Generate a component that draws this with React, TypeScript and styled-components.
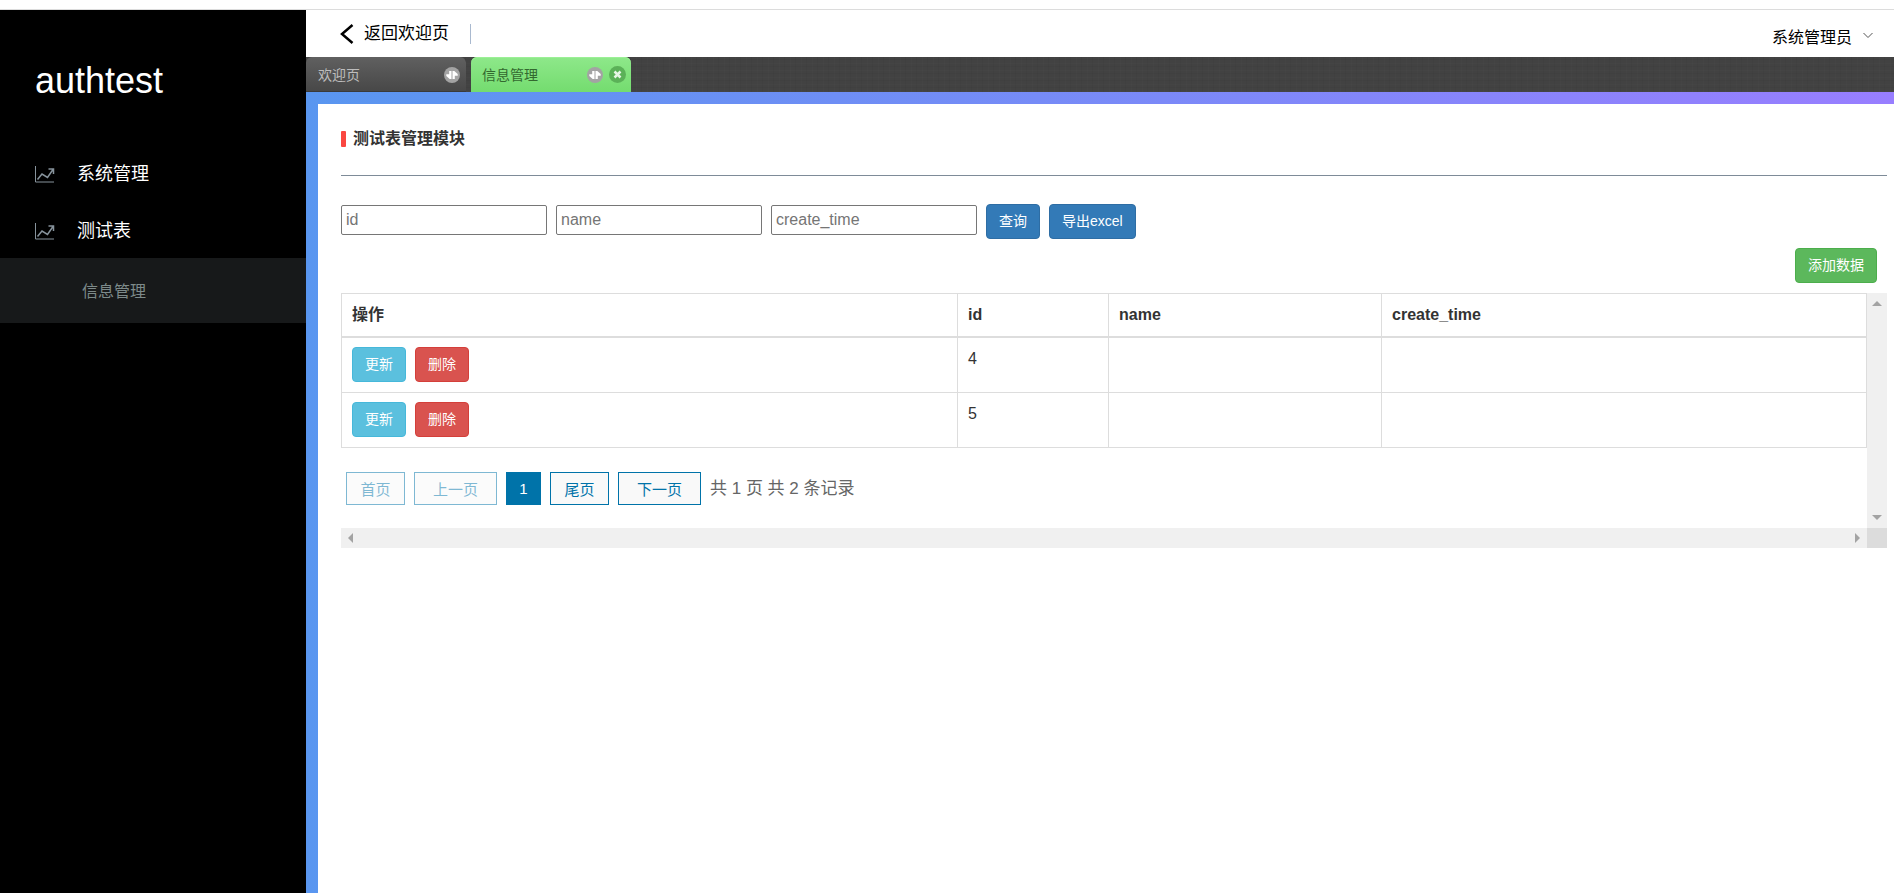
import React from 'react';
import styled, { createGlobalStyle, css } from 'styled-components';

const GlobalStyle = createGlobalStyle`
  * { box-sizing: border-box; }
  body {
    margin: 0;
    background: #fff;
    color: #333;
    font-family: "Liberation Sans", "Noto Sans CJK SC", sans-serif;
    font-size: 16px;
    line-height: 24px;
  }
  button, input { font-family: inherit; }
  a { color: inherit; text-decoration: none; }
`;

const Page = styled.div`
  display: flex;
  flex-direction: column;
  min-height: 100vh;
`;

const TopStrip = styled.div`
  height: 10px;
  border-bottom: 1px solid #dcdcdc;
`;

const Body = styled.div`
  display: flex;
  flex: 1;
`;

const Sidebar = styled.aside`
  flex: 0 0 306px;
  background: #000;
`;

const Brand = styled.h1`
  margin: 0;
  padding: 51px 35px 0;
  color: #fff;
  font-size: 36px;
  font-weight: 400;
  line-height: 40px;
`;

const Menu = styled.nav`
  padding-top: 43px;
`;

const MenuItem = styled.a`
  display: flex;
  align-items: center;
  gap: 22px;
  height: 57px;
  padding: 2px 0 0 35px;
  color: #fff;
  font-size: 18px;

  svg { color: #87939c; }
`;

const SubItem = styled.a`
  display: flex;
  align-items: center;
  height: 65px;
  padding: 2px 0 0 82px;
  background: #17191a;
  color: #7d8a8a;
`;

const Main = styled.main`
  display: flex;
  flex: 1;
  flex-direction: column;
  min-width: 0;
`;

const Header = styled.header`
  display: flex;
  justify-content: space-between;
  height: 47px;
  padding: 0 20px 0 34px;
  color: #000;
`;

const BackLink = styled.a`
  display: flex;
  align-items: center;
  align-self: flex-start;
  gap: 10px;
  height: 20px;
  margin-top: 14px;
  padding-right: 21px;
  border-right: 1px solid #a9b9cf;
  font-size: 17px;
`;

const UserButton = styled.button`
  display: flex;
  align-items: center;
  gap: 10px;
  padding: 5px 0 0;
  border: 0;
  background: none;
  color: #000;
  font-size: 16px;
`;

const TabBar = styled.div`
  display: flex;
  gap: 5px;
  height: 35px;
  background:
    repeating-linear-gradient(90deg, rgba(255, 255, 255, 0.01) 0 1px, transparent 1px 5px, rgba(0, 0, 0, 0.03) 5px 6px, transparent 6px 11px),
    repeating-linear-gradient(0deg, rgba(255, 255, 255, 0.01) 0 1px, transparent 1px 4px, rgba(0, 0, 0, 0.03) 4px 5px, transparent 5px 7px),
    #424242;
`;

const Tab = styled.div<{ $active?: boolean }>`
  display: flex;
  align-items: center;
  gap: 6px;
  width: 160px;
  padding: 0 6px 0 12px;
  border-radius: 6px 6px 0 0;
  font-size: 14px;
  ${({ $active }) =>
    $active
      ? css`
          padding: 0 5px 0 11px;
          background: linear-gradient(#8ee88a, #74dc6f);
          color: #33682f;
          box-shadow: inset 0 1px #9bf096;
        `
      : css`
          background: linear-gradient(#606060, #474747);
          color: #bdbdbd;
          box-shadow: inset 0 -1px #3a3a3a;
        `}
`;

const TabLabel = styled.a`
  flex: 1;
`;

const IconButton = styled.button`
  display: flex;
  padding: 0;
  border: 0;
  background: none;
`;

const Frame = styled.div`
  display: flex;
  flex: 1;
  padding: 12px 0 0 12px;
  background: linear-gradient(90deg, #5996f0, #987eff);
`;

const Panel = styled.section`
  flex: 1;
  min-width: 0;
  padding: 23px 7px 23px 23px;
  background: #fff;
`;

const Title = styled.h2`
  display: flex;
  align-items: center;
  gap: 7px;
  margin: 0;
  padding-bottom: 24px;
  border-bottom: 1px solid #7e8b98;
  font-size: 16px;
  line-height: 24px;

  &::before {
    content: "";
    width: 5px;
    height: 16px;
    border-radius: 1px;
    background: #fa4741;
  }
`;

const Filters = styled.form`
  display: flex;
  flex-wrap: wrap;
  align-items: flex-start;
  gap: 9px;
  padding-top: 28px;
`;

const Field = styled.input`
  width: 206px;
  height: 30px;
  margin: 1px 0 0;
  padding: 1px 4px;
  border: 1px solid #767676;
  border-radius: 2px;
  font-size: 16px;

  &::placeholder { color: #757575; }
`;

const tones = {
  primary: ['#337ab7', '#2e6da4'],
  success: ['#5cb85c', '#4cae4c'],
  info: ['#5bc0de', '#46b8da'],
  danger: ['#d9534f', '#d43f3a'],
};

const Button = styled.button<{ $tone: keyof typeof tones }>`
  height: 35px;
  padding: 0 12px 2px;
  border: 1px solid ${({ $tone }) => tones[$tone][1]};
  border-radius: 4px;
  background: ${({ $tone }) => tones[$tone][0]};
  color: #fff;
  font-size: 14px;
  line-height: 20px;
`;

const Toolbar = styled.div`
  display: flex;
  justify-content: flex-end;
  padding: 9px 10px 10px;
`;

const ScrollArea = styled.div`
  display: grid;
  grid-template-columns: 1fr 20px;
  grid-template-rows: auto 20px;
`;

const ScrollTrack = styled.div<{ $vertical?: boolean }>`
  display: flex;
  flex-direction: ${({ $vertical }) => ($vertical ? 'column' : 'row')};
  align-items: center;
  justify-content: space-between;
  padding: ${({ $vertical }) => ($vertical ? '8px 0' : '0 7px')};
  background: #f0f0f0;
`;

const ScrollCorner = styled.div`
  background: #dcdcdc;
`;

const DataTable = styled.table`
  width: 100%;
  border-collapse: collapse;
  table-layout: fixed;

  th, td {
    padding: 9px 10px;
    border: 1px solid #ddd;
    text-align: left;
    vertical-align: top;
    line-height: 24px;
  }
  th { border-bottom-width: 2px; }
  td { padding-bottom: 10px; }
`;

const Col = styled.col<{ $share: number }>`
  width: ${({ $share }) => $share}%;
`;

const RowActions = styled.div`
  display: flex;
  gap: 9px;
`;

const Pagination = styled.nav`
  display: flex;
  align-items: center;
  gap: 9px;
  padding: 24px 5px 23px;
  color: #666;
  font-size: 17px;
`;

const PageButton = styled.button<{ $wide?: boolean; $current?: boolean }>`
  min-width: ${({ $wide, $current }) => ($wide ? 83 : $current ? 35 : 59)}px;
  height: 33px;
  padding: 0;
  border: 1px solid #0073a9;
  background: ${({ $current }) => ($current ? '#0073a9' : '#f9f9f9')};
  color: ${({ $current }) => ($current ? '#fff' : '#0073a9')};
  font-size: 15px;

  &:disabled { opacity: 0.5; }
`;

const ChartIcon = () => (
  <svg width="20" height="18" viewBox="0 0 20 18" fill="none" stroke="currentColor" aria-hidden="true">
    <path d="M.5 1v16H19" />
    <path d="M2.5 14.5 7 9l5.500 3.500L18 4.500M13.500 4h5v5" strokeWidth="1.500" />
  </svg>
);

const BackIcon = () => (
  <svg width="14" height="20" viewBox="0 0 14 20" fill="none" stroke="#000" strokeWidth="2.500" aria-hidden="true">
    <path d="M12.500 1 2 10l10.500 9" />
  </svg>
);

const ChevronIcon = () => (
  <svg width="12" height="8" viewBox="0 0 12 8" fill="none" stroke="#555" aria-hidden="true">
    <path d="M1.500 1 6 5.500 10.500 1" />
  </svg>
);

const RefreshIcon = () => (
  <svg width="16" height="16" viewBox="0 0 16 16" aria-hidden="true">
    <circle cx="8" cy="8" r="8" fill="#a3a3a3" />
    <path d="M5.200 4h2.300v8H5.700L2.300 9V7.300h2.900zM10.800 12H8.500V4h1.800l3.400 3v1.700h-2.900z" fill="#fff" />
  </svg>
);

const CloseIcon = () => (
  <svg width="17" height="17" viewBox="0 0 17 17" aria-hidden="true">
    <circle cx="8.500" cy="8.500" r="8.500" fill="#5bb158" />
    <path d="m5.500 5.500 6 6m0-6-6 6" stroke="#e6f5e5" strokeWidth="2.500" />
  </svg>
);

const arrows = {
  up: 'M0 5 5 0l5 5z',
  down: 'M0 0h10L5 5z',
  left: 'M5 0v10L0 5z',
  right: 'M0 0l5 5-5 5z',
};

const ScrollArrow = ({ to }: { to: keyof typeof arrows }) => {
  const flat = to === 'up' || to === 'down';
  return (
    <svg width={flat ? 10 : 5} height={flat ? 5 : 10} fill="#a3a3a3" aria-hidden="true">
      <path d={arrows[to]} />
    </svg>
  );
};

const columns = ['id', 'name', 'create_time'];
const rows = [
  { id: 4, name: '', create_time: '' },
  { id: 5, name: '', create_time: '' },
];

export default function App() {
  return (
    <>
      <GlobalStyle />
      <Page>
        <TopStrip />
        <Body>
          <Sidebar>
            <Brand>authtest</Brand>
            <Menu>
              <MenuItem href="#system"><ChartIcon />系统管理</MenuItem>
              <MenuItem href="#test"><ChartIcon />测试表</MenuItem>
              <SubItem href="#info">信息管理</SubItem>
            </Menu>
          </Sidebar>
          <Main>
            <Header>
              <BackLink href="#welcome"><BackIcon />返回欢迎页</BackLink>
              <UserButton type="button">系统管理员<ChevronIcon /></UserButton>
            </Header>
            <TabBar>
              <Tab>
                <TabLabel href="#welcome">欢迎页</TabLabel>
                <IconButton type="button" aria-label="刷新"><RefreshIcon /></IconButton>
              </Tab>
              <Tab $active>
                <TabLabel href="#info">信息管理</TabLabel>
                <IconButton type="button" aria-label="刷新"><RefreshIcon /></IconButton>
                <IconButton type="button" aria-label="关闭"><CloseIcon /></IconButton>
              </Tab>
            </TabBar>
            <Frame>
              <Panel>
                <Title>测试表管理模块</Title>
                <Filters onSubmit={(e) => e.preventDefault()}>
                  {columns.map((name) => (
                    <Field key={name} name={name} placeholder={name} aria-label={name} />
                  ))}
                  <Button $tone="primary" type="submit">查询</Button>
                  <Button $tone="primary" type="button">导出excel</Button>
                </Filters>
                <Toolbar>
                  <Button $tone="success" type="button">添加数据</Button>
                </Toolbar>
                <ScrollArea>
                  <div>
                    <DataTable>
                      <colgroup>
                        <Col $share={40.4} />
                        <Col $share={9.9} />
                        <Col $share={17.9} />
                        <Col $share={31.8} />
                      </colgroup>
                      <thead>
                        <tr>
                          <th scope="col">操作</th>
                          {columns.map((name) => <th key={name} scope="col">{name}</th>)}
                        </tr>
                      </thead>
                      <tbody>
                        {rows.map((row) => (
                          <tr key={row.id}>
                            <td>
                              <RowActions>
                                <Button $tone="info" type="button">更新</Button>
                                <Button $tone="danger" type="button">删除</Button>
                              </RowActions>
                            </td>
                            <td>{row.id}</td>
                            <td>{row.name}</td>
                            <td>{row.create_time}</td>
                          </tr>
                        ))}
                      </tbody>
                    </DataTable>
                    <Pagination aria-label="分页">
                      <PageButton type="button" disabled>首页</PageButton>
                      <PageButton type="button" $wide disabled>上一页</PageButton>
                      <PageButton type="button" $current aria-current="page">1</PageButton>
                      <PageButton type="button">尾页</PageButton>
                      <PageButton type="button" $wide>下一页</PageButton>
                      <span>共 1 页 共 2 条记录</span>
                    </Pagination>
                  </div>
                  <ScrollTrack $vertical>
                    <ScrollArrow to="up" />
                    <ScrollArrow to="down" />
                  </ScrollTrack>
                  <ScrollTrack>
                    <ScrollArrow to="left" />
                    <ScrollArrow to="right" />
                  </ScrollTrack>
                  <ScrollCorner />
                </ScrollArea>
              </Panel>
            </Frame>
          </Main>
        </Body>
      </Page>
    </>
  );
}
